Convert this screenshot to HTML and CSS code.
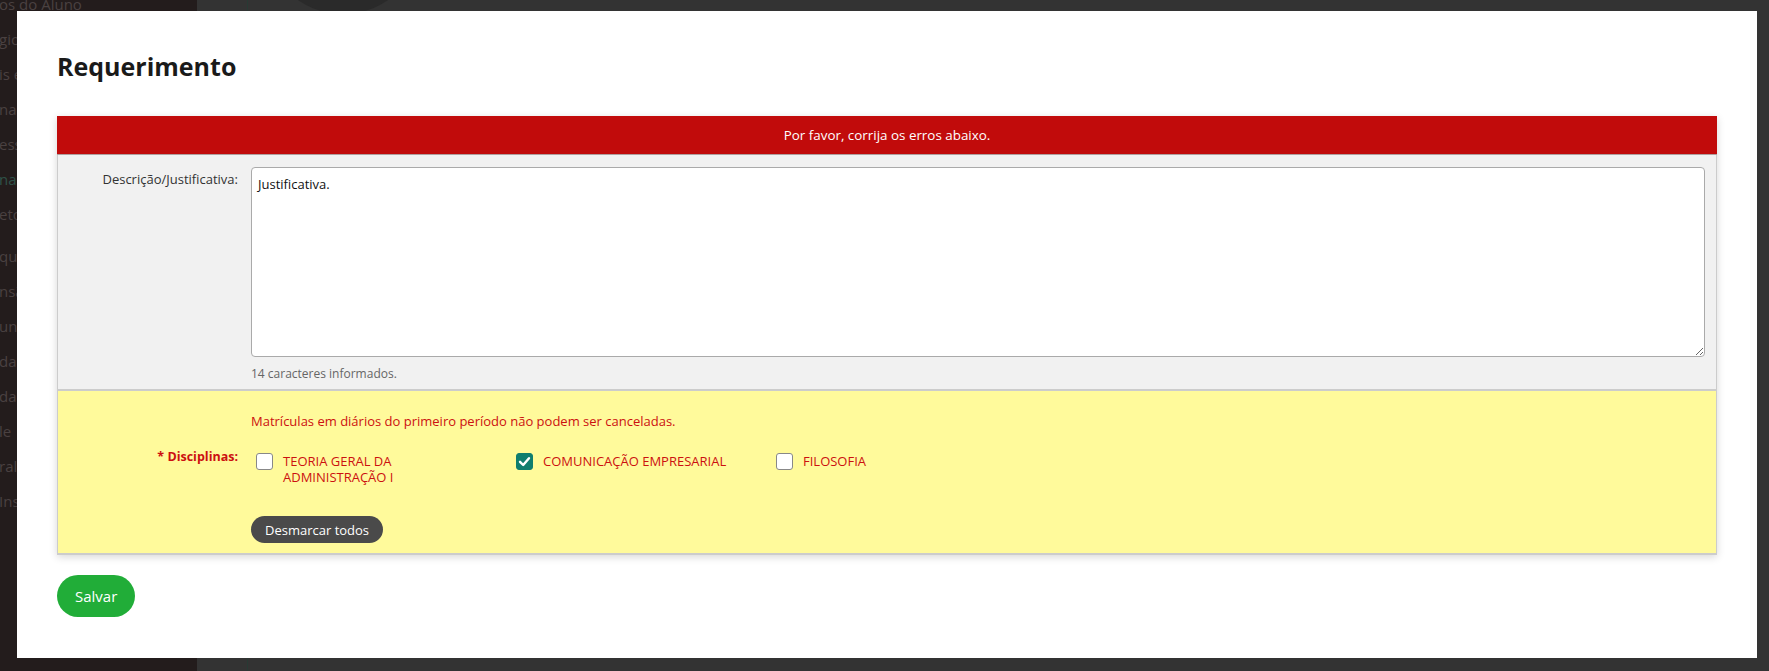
FILE: index.html
```html
<html>
  <head>
    <meta charset="UTF-8">
    <title>Requerimento</title>
    <link rel="stylesheet" href="styles.css">
  </head>
  <body>
    <div class="page">
      <div class="sidebar">
        <div class="side-item first">os do Aluno</div>
        <div class="side-item">gios</div>
        <div class="side-item">is e</div>
        <div class="side-item">nas</div>
        <div class="side-item">ess</div>
        <div class="side-item active">nas</div>
        <div class="side-item">etos</div>
        <div class="side-item gap">quis</div>
        <div class="side-item">nsã</div>
        <div class="side-item">un</div>
        <div class="side-item">da</div>
        <div class="side-item">dad</div>
        <div class="side-item">le</div>
        <div class="side-item">ral</div>
        <div class="side-item">Ins</div>
      </div>
      <div class="main">
        <div class="main-column">
          <div class="avatar"></div>
        </div>
      </div>
    </div>

    <!-- modal -->
    <div class="overlay">
      <div class="modal">
        <h1>Requerimento</h1>

        <div class="form-box">
          <div class="error-bar">Por favor, corrija os erros abaixo.</div>

          <div class="field-row">
            <label class="field-label">Descrição/Justificativa:</label>
            <div class="field-input">
              <textarea class="justificativa">Justificativa.</textarea>
              <div class="help-text">14 caracteres informados.</div>
            </div>
          </div>

          <div class="field-row error-row">
            <div></div>
            <div class="error-msg">Matrículas em diários do primeiro período não podem ser canceladas.</div>
            <label class="field-label required">* Disciplinas:</label>
            <div class="field-input">
              <div class="options">
                <div class="option">
                  <span class="check"></span>
                  <span class="option-text">TEORIA GERAL DA ADMINISTRAÇÃO I</span>
                </div>
                <div class="option">
                  <span class="check checked">
                    <svg width="17" height="17" viewBox="0 0 17 17"><path d="M4 8.8 L7.2 12 L13 5.2" fill="none" stroke="#fff" stroke-width="2.4" stroke-linecap="round" stroke-linejoin="round"/></svg>
                  </span>
                  <span class="option-text">COMUNICAÇÃO EMPRESARIAL</span>
                </div>
                <div class="option">
                  <span class="check"></span>
                  <span class="option-text">FILOSOFIA</span>
                </div>
              </div>
              <button class="btn-dark">Desmarcar todos</button>
            </div>
          </div>
        </div>

        <button class="btn-save">Salvar</button>
      </div>
    </div>
  </body>
</html>
```

FILE: styles.css
```css
body {
  margin: 0;
  font-family: "Open Sans", "Liberation Sans", sans-serif;
  overflow: hidden;
}
.page {
  display: flex;
  height: 100vh;
}
.sidebar {
  width: 197px;
  background-color: #231c1c;
  overflow: hidden;
}
.side-item {
  height: 35px;
  line-height: 35px;
  font-size: 15px;
  color: #4a4141;
  white-space: nowrap;
  margin-left: -1px;
}
.side-item.first {
  margin-top: -13px;
}
.side-item.active {
  color: #2f5249;
}
.side-item.gap {
  margin-top: 7px;
}
.main {
  flex: 1;
  background-color: #333;
  padding-left: 50px;
}
.main-column {
  height: 100%;
  border-left: 1px solid #283a34;
  overflow: hidden;
}
.avatar {
  width: 160px;
  height: 160px;
  border-radius: 50%;
  background-color: #2a2a2a;
  margin-top: -146px;
  margin-left: 15px;
}

/* modal */
.overlay {
  position: fixed;
  top: 0;
  left: 0;
  right: 0;
  bottom: 0;
  padding: 11px 12px 13px 17px;
  display: flex;
}
.modal {
  flex: 1;
  background: white;
  padding: 38px 40px;
}
.modal h1 {
  margin: 0 0 33px 0;
  font-size: 25px;
  line-height: 34px;
  font-weight: bold;
  color: #1a1a1a;
}
.form-box {
  box-shadow: 0 2px 8px rgba(0, 0, 0, 0.16);
}
.error-bar {
  height: 39px;
  background-color: #c10b0b;
  color: white;
  font-size: 13.4px;
  display: flex;
  align-items: center;
  justify-content: center;
  border-bottom: 1px solid #b0a0a0;
  box-sizing: border-box;
}
.field-row {
  display: grid;
  grid-template-columns: 193px 1fr;
  background-color: #f1f1f1;
  border: 1px solid #ccc;
  border-top: 0;
  padding: 12px 11px 7px 0;
}
.field-label {
  text-align: right;
  padding-right: 13px;
  padding-top: 3px;
  font-size: 13px;
  line-height: 18px;
  color: #333;
}
.justificativa {
  display: block;
  width: 100%;
  height: 190px;
  box-sizing: border-box;
  border: 1px solid #aaa;
  border-radius: 4px;
  padding: 7px 6px;
  font-family: "Open Sans", "Liberation Sans", sans-serif;
  font-size: 13px;
  line-height: 18px;
  color: #111;
  background: white;
  resize: vertical;
}
.help-text {
  margin-top: 8px;
  font-size: 12px;
  line-height: 17px;
  color: #666;
}
.error-row {
  background-color: #fffa9b;
  border-top: 1px solid #ccc;
  border-bottom: 2px solid #ccc;
  padding: 21px 11px 10px 0;
}
.error-msg {
  font-size: 13px;
  line-height: 18px;
  color: #cc1010;
  margin-bottom: 18px;
}
.field-label.required {
  padding-top: 0;
  line-height: 17px;
  font-size: 12.5px;
  font-weight: bold;
  color: #cc1010;
}
.options {
  display: grid;
  grid-template-columns: repeat(3, 260px);
  padding-top: 5px;
}
.option {
  display: flex;
  align-items: flex-start;
}
.check {
  flex: none;
  width: 17px;
  height: 17px;
  box-sizing: border-box;
  margin: 0 10px 0 5px;
  border: 1px solid #888;
  border-radius: 3px;
  background: white;
}
.check.checked {
  background-color: #0f7d6e;
  border-color: #0f7d6e;
}
.check svg {
  display: block;
  margin: -1px;
}
.option-text {
  max-width: 200px;
  font-size: 13px;
  line-height: 16px;
  color: #cc1010;
}
.btn-dark {
  margin-top: 31px;
  height: 27px;
  padding: 0 14px;
  border: none;
  border-radius: 14px;
  background-color: #4a4a4a;
  color: white;
  font-family: "Open Sans", "Liberation Sans", sans-serif;
  font-size: 13px;
}
.btn-save {
  margin-top: 20px;
  height: 42px;
  padding: 0 18px;
  border: none;
  border-radius: 21px;
  background-color: #21ad38;
  color: white;
  font-family: "Open Sans", "Liberation Sans", sans-serif;
  font-size: 15px;
}
```
